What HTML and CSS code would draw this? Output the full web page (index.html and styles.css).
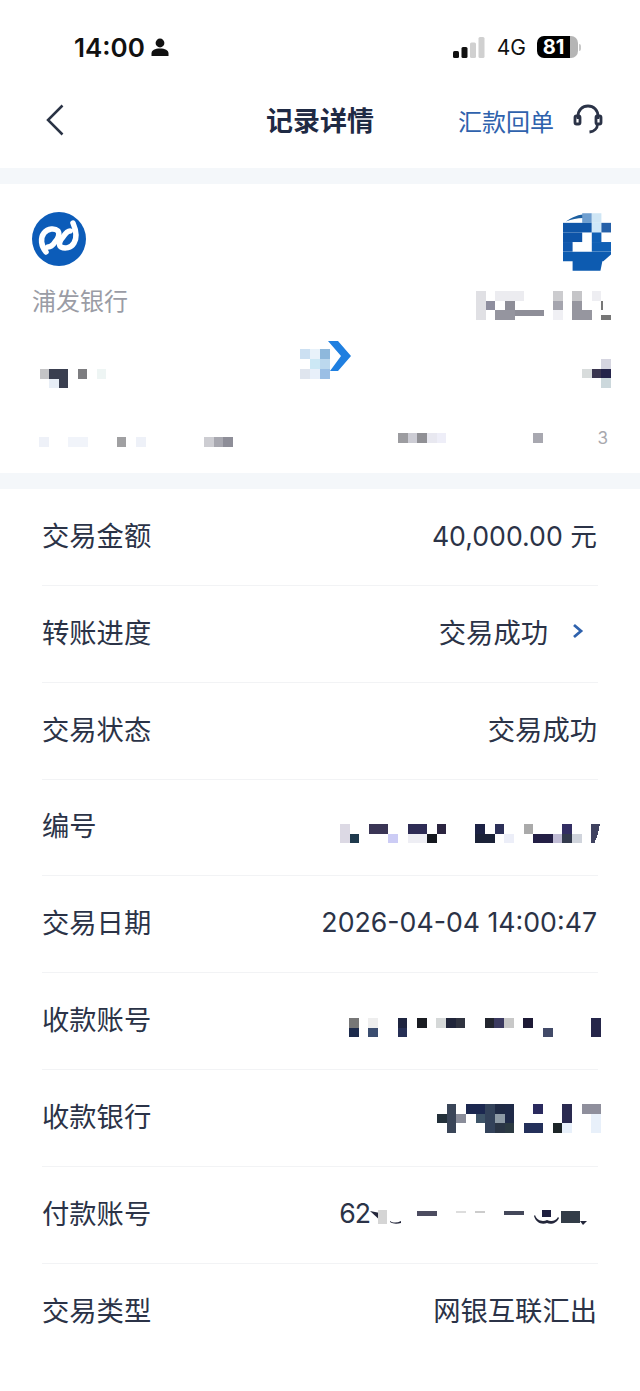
FILE: index.html
```html
<!DOCTYPE html>
<html lang="zh-CN">
<head>
  <meta charset="UTF-8">
  <title>记录详情</title>
  <meta name="viewport" content="width=device-width, initial-scale=1.0">
  <link rel="stylesheet" href="styles.css">
</head>
<body>
  <div class="status-bar">
    <div class="status-left">
      <span class="clock">14:00</span>
      <svg class="person" viewBox="0 0 18 18"><circle cx="9" cy="5" r="4.4"/><path d="M0.5 18v-2.5c0-3.2 3.5-5 8.5-5s8.500 1.800 8.500 5V18z"/></svg>
    </div>
    <div class="status-right">
      <svg class="signal" viewBox="0 0 32 21">
        <rect x="0" y="14" width="6" height="7" rx="1.500" fill="#111"/>
        <rect x="8.500" y="10" width="6" height="11" rx="1.500" fill="#111"/>
        <rect x="17" y="5.500" width="6" height="15.500" rx="1.500" fill="#d0d0d0"/>
        <rect x="25.500" y="0" width="6" height="21" rx="1.500" fill="#d0d0d0"/>
      </svg>
      <span class="network">4G</span>
      <div class="battery"><div class="battery-body">81</div><div class="battery-nub"></div></div>
    </div>
  </div>

  <div class="nav">
    <svg class="back" viewBox="0 0 18 32"><path d="M16.500 1.500 2 16l14.500 14.500"/></svg>
    <div class="nav-title">记录详情</div>
    <div class="nav-actions">
      <a class="receipt" href="#">汇款回单</a>
      <svg class="headset" viewBox="0 0 30 30">
        <path class="headset-line" d="M5 15V12.500C5 6 9.500 2 15 2s10 4 10 10.500V15"/>
        <path class="headset-line" d="M24.500 20c0 4.500-3.500 7.500-8 8"/>
        <rect class="headset-line" x="2" y="12" width="5" height="8" rx="1.500"/>
        <rect class="headset-line" x="23" y="12" width="5" height="8" rx="1.500"/>
      </svg>
    </div>
  </div>

  <div class="band"></div>

  <div class="card">
    <div class="party">
      <svg class="bank-logo" viewBox="0 0 54 54">
        <circle cx="27" cy="27" r="27" fill="#0c5cb9"/>
        <path class="ribbon" d="M14 40C9 34 8 26 12 21 16 16 23 16 26 19 28 22 26 27 23 30 21 33 19 35 16 35"/>
        <path class="ribbon" d="M41 11C44 18 45 26 42 31 39 36 33 37 29 35 26 33 28 28 31 25 33 22 36 19 38 19"/>
      </svg>
      <div class="bank-name">浦发银行</div>
      <svg class="mosaic name-left" viewBox="0 0 8 2" shape-rendering="crispEdges">
        <rect x="0" y="0" width="1" height="1" fill="#c4c4c6"/>
        <rect x="1" y="0" width="2" height="1" fill="#3a3f50"/>
        <rect x="1" y="1" width="1" height="1" fill="#e8eef6"/>
        <rect x="2" y="1" width="1" height="1" fill="#3a3f50"/>
        <rect x="4" y="0" width="1" height="1" fill="#7d7d80"/>
        <rect x="6" y="0" width="1" height="1" fill="#eef5f4"/>
      </svg>
      <svg class="mosaic account-left" viewBox="0 0 20 1" shape-rendering="crispEdges">
        <rect x="0" y="0" width="1" height="1" fill="#eef1f8"/>
        <rect x="3" y="0" width="2" height="1" fill="#f1f4fa"/>
        <rect x="8" y="0" width="1" height="1" fill="#a0a0a2"/>
        <rect x="10" y="0" width="1" height="1" fill="#eef1f8"/>
        <rect x="17" y="0" width="1" height="1" fill="#cdcdd2"/>
        <rect x="18" y="0" width="1" height="1" fill="#a8a8b0"/>
        <rect x="19" y="0" width="1" height="1" fill="#8e8e98"/>
      </svg>
    </div>

    <svg class="transfer-arrow" viewBox="0 0 52 38">
      <g shape-rendering="crispEdges">
        <rect x="0" y="8" width="10" height="10" fill="#cce0f2"/>
        <rect x="10" y="8" width="10" height="10" fill="#e8f2fa"/>
        <rect x="20" y="8" width="10" height="10" fill="#8eb8dc"/>
        <rect x="10" y="18" width="10" height="10" fill="#cce8f5"/>
        <rect x="20" y="18" width="10" height="10" fill="#bcd8ee"/>
        <rect x="0" y="28" width="10" height="10" fill="#dfe5ee"/>
        <rect x="10" y="28" width="10" height="10" fill="#e8f0fa"/>
        <rect x="20" y="28" width="10" height="10" fill="#9bbfe5"/>
      </g>
      <path d="M28 0h10l13 15-13 15H30l11-15z" fill="#1f7fe0"/>
    </svg>

    <div class="party party-right">
      <svg class="payee-logo" viewBox="0 0 5 6.200">
        <path d="M0.300 0.850C1 0.350 1.800 0.050 2.600 0.100L2.100 0.500C1.500 0.500 0.900 0.650 0.300 0.850z" fill="#1c5fa0"/>
        <rect x="2" y="0" width="1" height="1" fill="#6f9fd0"/>
        <rect x="3" y="0" width="1" height="1" fill="#cfe6f5"/>
        <rect x="0" y="1" width="3" height="1" fill="#0f56a8"/>
        <rect x="3" y="1" width="1" height="1" fill="#cfe8f8"/>
        <rect x="4" y="1" width="1" height="1" fill="#2560a8"/>
        <rect x="0" y="2" width="2" height="1" fill="#0d54a8"/>
        <rect x="3" y="2" width="1" height="1" fill="#1060b5"/>
        <rect x="0" y="3" width="1" height="1" fill="#1058ad"/>
        <rect x="3" y="3" width="2" height="1" fill="#1060b5"/>
        <path d="M0 4h5v0.300L4.200 5H4.100L3.900 6H1V5H0z" fill="#0d5bb0"/>
      </svg>
      <svg class="mosaic name-right" viewBox="0 0 14 3" shape-rendering="crispEdges">
        <rect x="0" y="0" width="1" height="3" fill="#e0e0e4"/>
        <rect x="1" y="1" width="1" height="1" fill="#8e8e9e"/>
        <rect x="2" y="0" width="3" height="1" fill="#ececf0"/>
        <rect x="2" y="2" width="2" height="1" fill="#95959f"/>
        <rect x="3" y="1" width="1" height="1" fill="#8e8e98"/>
        <rect x="4" y="2" width="3" height="0.600" fill="#8e8e98"/>
        <rect x="8" y="0" width="1" height="1" fill="#cccccf"/>
        <rect x="8" y="1" width="1" height="1" fill="#a5a5ae"/>
        <rect x="8" y="2" width="1" height="1" fill="#f0f0f4"/>
        <rect x="10" y="0" width="1" height="1" fill="#c5c5c8"/>
        <rect x="10" y="1" width="1" height="2" fill="#96969f"/>
        <rect x="11" y="2" width="1" height="1" fill="#96969f"/>
        <rect x="12" y="0" width="1" height="1" fill="#eeeef2"/>
        <rect x="13" y="1" width="0.200" height="1" fill="#777"/>
        <rect x="13" y="2.500" width="1" height="0.500" fill="#777"/>
      </svg>
      <svg class="mosaic name-end" viewBox="0 0 3 3" shape-rendering="crispEdges">
        <rect x="0" y="1" width="1" height="1" fill="#d8dcdc"/>
        <rect x="1" y="1" width="1" height="1" fill="#3a3650"/>
        <rect x="2" y="0" width="1" height="1" fill="#d5d5e0"/>
        <rect x="2" y="1" width="1" height="1" fill="#24244a"/>
        <rect x="2" y="2" width="1" height="1" fill="#ccd8dc"/>
      </svg>
      <div class="account-right">
        <svg class="mosaic account-blocks" viewBox="0 0 15 1" shape-rendering="crispEdges">
          <rect x="0" y="0" width="1" height="1" fill="#9c9ca0"/>
          <rect x="1" y="0" width="1" height="1" fill="#ccccd4"/>
          <rect x="2" y="0" width="1" height="1" fill="#909095"/>
          <rect x="3" y="0" width="1" height="1" fill="#e8e8f0"/>
          <rect x="4" y="0" width="1" height="1" fill="#eeeef8"/>
          <rect x="14" y="0" width="1" height="1" fill="#a8a8b0"/>
        </svg>
        <span class="account-end">3</span>
      </div>
    </div>
  </div>

  <div class="band"></div>

  <div class="rows">
    <div class="row"><span>交易金额</span><span class="value num">40,000.00 元</span></div>
    <div class="row">
      <span>转账进度</span>
      <span class="value progress">交易成功
        <svg class="more" viewBox="0 0 12 16"><path d="M2 2l7 6-7 6"/></svg>
      </span>
    </div>
    <div class="row"><span>交易状态</span><span class="value">交易成功</span></div>
    <div class="row">
      <span>编号</span>
      <svg class="mosaic row-mosaic cols-27" viewBox="0 0 27 2" shape-rendering="crispEdges">
        <rect x="0" y="0" width="1" height="2" fill="#dcd9e4"/>
        <rect x="1" y="1" width="1" height="1" fill="#1f3a4d"/>
        <rect x="3" y="0" width="2" height="1" fill="#3a3555"/>
        <rect x="5" y="1" width="1" height="1" fill="#ccccf5"/>
        <rect x="7" y="0" width="2" height="1" fill="#2e2c55"/>
        <rect x="7" y="1" width="2" height="1" fill="#eeeef4"/>
        <rect x="9" y="1" width="1" height="1" fill="#15181f"/>
        <rect x="10" y="0" width="1" height="1" fill="#2b2540"/>
        <rect x="14" y="0" width="1" height="1" fill="#1c2245"/>
        <rect x="14" y="1" width="2" height="1" fill="#1b2238"/>
        <rect x="16" y="0" width="1" height="1" fill="#2c3058"/>
        <rect x="17" y="1" width="1" height="1" fill="#eceef8"/>
        <rect x="19" y="0" width="1" height="1" fill="#aaaaaa"/>
        <rect x="20" y="1" width="2" height="1" fill="#231f45"/>
        <rect x="22" y="1" width="1" height="1" fill="#c0bcd5"/>
        <rect x="23" y="0" width="1" height="1" fill="#332e63"/>
        <rect x="23" y="1" width="1" height="1" fill="#333a4d"/>
        <rect x="24" y="1" width="1" height="1" fill="#d0d4dc"/>
        <path d="M26 0h0.900L26.700 1 26.300 2H26z" fill="#3f4260"/>
      </svg>
    </div>
    <div class="row"><span>交易日期</span><span class="value num">2026-04-04 14:00:47</span></div>
    <div class="row">
      <span>收款账号</span>
      <svg class="mosaic row-mosaic cols-26" viewBox="0 0 26 2" shape-rendering="crispEdges">
        <rect x="0" y="0" width="1" height="1" fill="#777777"/>
        <rect x="0" y="1" width="1" height="1" fill="#1c2a4c"/>
        <rect x="2" y="0" width="1" height="1" fill="#eeeeee"/>
        <rect x="2" y="1" width="1" height="1" fill="#3b4d70"/>
        <rect x="5" y="0" width="1" height="1" fill="#1f2540"/>
        <rect x="5" y="1" width="1" height="1" fill="#262f55"/>
        <rect x="7" y="0" width="1" height="1" fill="#1a1c22"/>
        <rect x="9" y="0" width="1" height="1" fill="#d5d8d8"/>
        <rect x="10" y="0" width="1" height="1" fill="#20253a"/>
        <rect x="11" y="0" width="1" height="1" fill="#2f3340"/>
        <rect x="14" y="0" width="1" height="1" fill="#22252e"/>
        <rect x="15" y="0" width="1" height="1" fill="#3b3a60"/>
        <rect x="16" y="0" width="1" height="1" fill="#c8c8c8"/>
        <rect x="18" y="0" width="1" height="1" fill="#1d1a35"/>
        <rect x="20" y="1" width="1" height="1" fill="#424a68"/>
        <rect x="25" y="0" width="1" height="2" fill="#25264a"/>
      </svg>
    </div>
    <div class="row">
      <span>收款银行</span>
      <svg class="mosaic row-mosaic cols-17" viewBox="0 0 17 3" shape-rendering="crispEdges">
        <rect x="0" y="1" width="1" height="1" fill="#23303a"/>
        <rect x="1" y="0" width="1" height="3" fill="#3a4558"/>
        <rect x="2" y="1" width="1" height="1" fill="#8a8d9a"/>
        <rect x="3" y="0" width="2" height="1" fill="#1c2850"/>
        <rect x="4" y="1" width="1" height="1" fill="#3e5468"/>
        <rect x="5" y="0" width="1" height="3" fill="#33425a"/>
        <rect x="6" y="0" width="1" height="1" fill="#1f2a45"/>
        <rect x="6" y="1" width="1" height="1" fill="#8d9aa5"/>
        <rect x="6" y="2" width="1" height="1" fill="#2a3545"/>
        <rect x="7" y="0" width="1" height="2" fill="#1f2a48"/>
        <rect x="7" y="2" width="1" height="1" fill="#2c3a42"/>
        <rect x="9" y="2" width="2" height="1" fill="#24305a"/>
        <rect x="10" y="0" width="1" height="1" fill="#2a2a5e"/>
        <rect x="12" y="2" width="1" height="1" fill="#1d2528"/>
        <rect x="13" y="0" width="1" height="2" fill="#2a2a50"/>
        <rect x="13" y="2" width="1" height="1" fill="#e8f0fa"/>
        <rect x="15" y="0" width="2" height="1" fill="#8f8f9c"/>
        <rect x="16" y="1" width="1" height="2" fill="#e8f0fa"/>
      </svg>
    </div>
    <div class="row">
      <span>付款账号</span>
      <span class="value masked-account">62
        <svg class="account-mask" viewBox="0 0 231 20">
          <path d="M0 5l10 2 3 10z" fill="#23263a"/>
          <rect x="8" y="4" width="9" height="14" fill="#d5d5d5"/>
          <path d="M20 15c3 2 7 2 11 0v2c-4 1-8 1-11-1z" fill="#23263a"/>
          <rect x="47" y="5" width="20" height="5" fill="#4c4c60"/>
          <rect x="86" y="5" width="10" height="2" fill="#dddddd"/>
          <rect x="105" y="5" width="10" height="2" fill="#cccccc"/>
          <rect x="134" y="5" width="20" height="4" fill="#44485a"/>
          <rect x="172" y="4" width="9" height="7" fill="#1f2040"/>
          <path d="M165 9c2 6 8 7 12 5 4 2 9 1 11-3l1 1c-2 5-8 7-12 5-5 2-11 0-13-7z" fill="#23263a"/>
          <rect x="191" y="5" width="19" height="12" fill="#333d48"/>
          <path d="M210 15l7 0-4 4z" fill="#23263a"/>
        </svg>
      </span>
    </div>
    <div class="row"><span>交易类型</span><span class="value">网银互联汇出</span></div>
  </div>
</body>
</html>
```

FILE: styles.css
```css
body {
  margin: 0;
  padding: 0;
  width: 640px;
  min-height: 1391px;
  background: #fff;
  color: #2b3347;
  font-family: "Inter", "Noto Sans CJK SC", sans-serif;
}

/* status bar */
.status-bar {
  height: 94px;
  box-sizing: border-box;
  padding: 0 59px 0 74px;
  display: flex;
  align-items: center;
  justify-content: space-between;
}
.status-left {
  display: flex;
  align-items: center;
  gap: 6px;
}
.clock {
  font-size: 26px;
  font-weight: 600;
  color: #111;
}
.person {
  width: 18px;
  height: 18px;
  fill: #111;
}
.status-right {
  display: flex;
  align-items: center;
}
.signal {
  width: 32px;
  height: 21px;
  margin-right: 12px;
}
.network {
  font-size: 21px;
  color: #111;
  margin-right: 11px;
}
.battery {
  display: flex;
  align-items: center;
  gap: 1px;
}
.battery-body {
  width: 41px;
  height: 22px;
  border-radius: 7px;
  background: linear-gradient(to right, #000 0 33px, #b5b5b5 33px);
  color: #fff;
  font-size: 20px;
  font-weight: 700;
  line-height: 22px;
  text-align: center;
  padding-right: 8px;
  box-sizing: border-box;
}
.battery-nub {
  width: 2px;
  height: 7px;
  background: #c8c8c8;
  border-radius: 0 2px 2px 0;
}

/* nav */
.nav {
  height: 52px;
  margin-bottom: 22px;
  padding: 0 38px;
  display: grid;
  grid-template-columns: 1fr auto 1fr;
  align-items: center;
}
.back {
  width: 18px;
  height: 32px;
  margin-left: 8px;
  fill: none;
  stroke: #2a3345;
  stroke-width: 2.500;
}
.nav-title {
  font-size: 27px;
  font-weight: 700;
  color: #1f2a44;
  margin-bottom: 2px;
}
.nav-actions {
  display: flex;
  align-items: center;
  justify-content: flex-end;
  gap: 19px;
}
.receipt {
  font-size: 24px;
  color: #2f62ad;
  text-decoration: none;
}
.headset {
  width: 30px;
  height: 30px;
  margin-top: -3px;
  margin-right: -1px;
}
.headset-line {
  fill: none;
  stroke: #2b3347;
  stroke-width: 2.800;
}

.band {
  height: 16px;
  background: #f4f7fa;
}

/* transfer card */
.card {
  height: 289px;
  box-sizing: border-box;
  padding: 28px 29px 0 32px;
  display: grid;
  grid-template-columns: 268px 52px 1fr;
}
.party {
  display: flex;
  flex-direction: column;
  align-items: flex-start;
}
.party-right {
  align-items: flex-end;
}
.bank-logo {
  width: 54px;
  height: 54px;
}
.ribbon {
  fill: none;
  stroke: #fff;
  stroke-width: 5.500;
  stroke-linecap: round;
}
.bank-name {
  margin-top: 18px;
  font-size: 24px;
  line-height: 36px;
  color: #9a9ca5;
}
.mosaic {
  display: block;
  flex: none;
}
.name-left {
  width: 77px;
  height: 19px;
  margin: 49px 0 0 7px;
}
.account-left {
  width: 194px;
  height: 10px;
  margin: 49px 0 0 7px;
}
.transfer-arrow {
  width: 52px;
  height: 38px;
  margin-top: 129px;
}
.payee-logo {
  width: 48px;
  height: 60px;
  margin-top: 1px;
}
.name-right {
  width: 135px;
  height: 29px;
  margin-top: 18px;
}
.name-end {
  width: 29px;
  height: 29px;
  margin-top: 39px;
}
.account-right {
  margin-top: 45px;
  display: flex;
  align-items: center;
  gap: 0;
}
.account-blocks {
  width: 145px;
  height: 10px;
}
.account-end {
  width: 65px;
  margin-right: 3px;
  text-align: right;
  font-size: 17px;
  line-height: 10px;
  color: #a8a8ae;
}

/* detail rows */
.rows {
  padding: 0 42px;
}
.row {
  height: 96.850px;
  box-sizing: border-box;
  padding-bottom: 6px;
  display: flex;
  align-items: center;
  justify-content: space-between;
  border-bottom: 1px solid #f2f3f5;
  font-size: 27.300px;
}
.row:last-child {
  border-bottom: 0;
}
.value {
  display: flex;
  align-items: center;
  margin-right: 1px;
}
.num {
  font-size: 26.700px;
  padding-top: 2px;
}
.progress {
  margin-right: 14px;
}
.more {
  width: 12px;
  height: 16px;
  margin-left: 24px;
  fill: none;
  stroke: #2f62ad;
  stroke-width: 2.800;
}
.row-mosaic {
  margin-right: -3px;
}
.row-mosaic.cols-27 {
  width: 261px;
  height: 19.330px;
  margin-top: 18px;
}
.row-mosaic.cols-26 {
  width: 252px;
  height: 19.380px;
  margin-top: 20px;
}
.row-mosaic.cols-17 {
  width: 164px;
  height: 29px;
  margin-top: 8px;
}
.masked-account {
  margin-right: -3px;
  padding-top: 2px;
  font-size: 26.700px;
  letter-spacing: -1px;
}
.account-mask {
  width: 231px;
  height: 20px;
  margin-top: 6px;
}
```
